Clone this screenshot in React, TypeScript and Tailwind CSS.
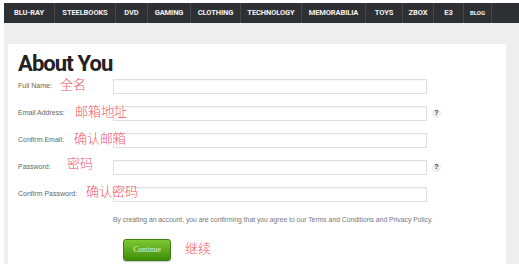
import React from 'react';

const navItems = [
  { label: 'BLU-RAY', w: 'w-[51px]' },
  { label: 'STEELBOOKS', w: 'w-[61px]' },
  { label: 'DVD', w: 'w-[32px]' },
  { label: 'GAMING', w: 'w-[43px]' },
  { label: 'CLOTHING', w: 'w-[50px]' },
  { label: 'TECHNOLOGY', w: 'w-[61px]' },
  { label: 'MEMORABILIA', w: 'w-[64px]' },
  { label: 'TOYS', w: 'w-[37px]' },
  { label: 'ZBOX', w: 'w-[31px]' },
  { label: 'E3', w: 'w-[30px]' },
];

const fields = [
  { label: 'Full Name:', help: false },
  { label: 'Email Address:', help: true },
  { label: 'Confirm Email:', help: false },
  { label: 'Password:', help: true },
  { label: 'Confirm Password:', help: false },
];

// red handwritten-style notes laid over the form
const notes = [
  { text: '全名', pos: 'left-[52px] top-[33px]' },
  { text: '邮箱地址', pos: 'left-[67px] top-[60px]' },
  { text: '确认邮箱', pos: 'left-[66px] top-[87px]' },
  { text: '密码', pos: 'left-[59px] top-[112px]' },
  { text: '确认密码', pos: 'left-[78px] top-[140px]' },
  { text: '继续', pos: 'left-[177px] top-[197px]' },
];

const App: React.FC = () => {
  return (
    <div className="w-[519px] h-[276px] bg-white overflow-hidden pl-[4px] pt-[3px]">
      <div className="w-[530px] bg-[#efefef]">
        {/* Top navigation */}
        <nav className="flex h-[20px] bg-[#2e3034] font-['Roboto',sans-serif] font-bold text-[#f2f2f2]">
          {navItems.map((item) => (
            <div
              key={item.label}
              className={`${item.w} flex items-center justify-center border-r border-[#45484c] text-[7.5px] tracking-[-0.1px]`}
            >
              {item.label}
            </div>
          ))}
          <div className="w-[28px] flex justify-center pt-[5px] border-r border-[#45484c] text-[6px]">
            BLOG
          </div>
        </nav>

        <div className="pt-[21px] pl-[4px]">
          <div className="relative w-[498px] h-[220px] bg-white pl-[10px] pt-[10px] font-['Liberation_Sans',Arial,sans-serif]">
            <h1 className="font-['Roboto',sans-serif] font-bold text-[22px] leading-[20px] tracking-[-0.9px] text-[#222]">
              About You
            </h1>

            <div className="mt-[5px] flex flex-col gap-[12px]">
              {fields.map((f) => (
                <div key={f.label} className="flex items-center h-[15px]">
                  <span className="w-[95px] text-[7px] text-[#666]">{f.label}</span>
                  <div className="w-[314px] h-[15px] border border-[#e0e0e0] shadow-[inset_0_1px_1px_rgba(0,0,0,0.04)]" />
                  {f.help && (
                    <span className="ml-[5px] w-[9px] h-[9px] rounded-full bg-[#eeeeee] flex items-center justify-center text-[7px] font-bold text-[#444]">
                      ?
                    </span>
                  )}
                </div>
              ))}
            </div>

            <p className="mt-[13px] pl-[95px] text-[6.8px] leading-[10px] text-[#777]">
              By creating an account, you are confirming that you agree to our Terms and Conditions and Privacy Policy.
            </p>

            <button className="mt-[14px] ml-[105px] w-[48px] h-[22px] rounded-[3px] border border-[#3c7f0c] bg-gradient-to-b from-[#7cc933] to-[#3f8d06] font-['Liberation_Serif',serif] text-[7.5px] text-[#e6f3d6] shadow-[0_1px_1px_rgba(0,0,0,0.2)]">
              Continue
            </button>

            {notes.map((n) => (
              <span
                key={n.text}
                className={`absolute ${n.pos} font-['Noto_Sans_CJK_SC',sans-serif] font-light text-[13px] leading-[13px] text-[#ef5a64]`}
              >
                {n.text}
              </span>
            ))}
          </div>
        </div>
      </div>
    </div>
  );
};

export default App;
